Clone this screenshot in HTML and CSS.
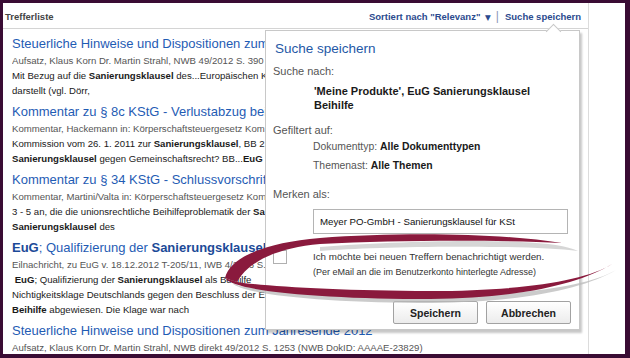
FILE: index.html
```html
<!DOCTYPE html>
<html lang="de">
<head>
    <meta charset="UTF-8">
    <title>Trefferliste - Suche speichern</title>
    <link rel="stylesheet" href="styles.css">
</head>
<body>
<div class="frame">
    <div class="results-col">
        <div class="list-head">
            <span class="list-title">Trefferliste</span>
            <span class="head-links">
                <a href="#">Sortiert nach "Relevanz" <span class="caret">&#9660;</span></a>
                <span class="sep">|</span>
                <a href="#">Suche speichern</a>
            </span>
        </div>

        <!-- hits behind the dropdown are cut at its left edge -->
        <ul class="hits">
            <li class="hit">
                <a class="hit-title" href="#">Steuerliche Hinweise und Dispositionen zum</a>
                <div class="hit-meta">Aufsatz, Klaus Korn Dr. Martin Strahl, NWB 49/2012 S. 390</div>
                <div class="hit-text">Mit Bezug auf die <b>Sanierungsklausel</b> des...Europäischen K</div>
                <div class="hit-text">darstellt (vgl. Dörr,</div>
            </li>
            <li class="hit">
                <a class="hit-title" href="#">Kommentar zu § 8c KStG - Verlustabzug bei</a>
                <div class="hit-meta">Kommentar, Hackemann in: Körperschaftsteuergesetz Kom</div>
                <div class="hit-text">Kommission vom 26. 1. 2011 zur <b>Sanierungsklausel</b>, BB 2</div>
                <div class="hit-text"><b>Sanierungsklausel</b> gegen Gemeinschaftsrecht? BB...<b>EuG</b></div>
            </li>
            <li class="hit">
                <a class="hit-title" href="#">Kommentar zu § 34 KStG - Schlussvorschrift</a>
                <div class="hit-meta">Kommentar, Martini/Valta in: Körperschaftsteuergesetz Kom</div>
                <div class="hit-text">3 - 5 an, die die unionsrechtliche Beihilfeproblematik der <b>Sa</b></div>
                <div class="hit-text"><b>Sanierungsklausel</b> des</div>
            </li>
            <li class="hit">
                <a class="hit-title" href="#"><b>EuG</b>; Qualifizierung der <b>Sanierungsklausel</b></a>
                <div class="hit-meta">Eilnachricht, zu EuG v. 18.12.2012 T-205/11, IWB 4/2013 S.</div>
                <div class="hit-text">&nbsp;<b>EuG</b>; Qualifizierung der <b>Sanierungsklausel</b> als Beihilfe</div>
                <div class="hit-text">Nichtigkeitsklage Deutschlands gegen den Beschluss der E</div>
                <div class="hit-text"><b>Beihilfe</b> abgewiesen. Die Klage war nach</div>
            </li>
            <li class="hit hit-open">
                <a class="hit-title" href="#">Steuerliche Hinweise und Dispositionen zum Jahresende 2012</a>
                <div class="hit-meta">Aufsatz, Klaus Korn Dr. Martin Strahl, NWB direkt 49/2012 S. 1253 (NWB DokID: AAAAE-23829)</div>
            </li>
        </ul>
    </div>
    <div class="side-col"></div>

    <!-- Dropdown: Suche speichern -->
    <div class="save-popup">
        <h2 class="popup-title">Suche speichern</h2>

        <div class="popup-label">Suche nach:</div>
        <div class="query">'Meine Produkte', EuG Sanierungsklausel Beihilfe</div>

        <div class="popup-label filter-label">Gefiltert auf:</div>
        <div class="filter-row">Dokumenttyp: <b>Alle Dokumenttypen</b></div>
        <div class="filter-row">Themenast: <b>Alle Themen</b></div>

        <div class="popup-label merk-label">Merken als:</div>
        <input class="name-input" type="text" value="Meyer PO-GmbH - Sanierungsklausel für KSt">

        <div class="notify">
            <span class="check-box"></span>
            <div class="notify-text">
                <div class="notify-main">Ich möchte bei neuen Treffern benachrichtigt werden.</div>
                <div class="notify-sub">(Per eMail an die im Benutzerkonto hinterlegte Adresse)</div>
            </div>
        </div>

        <div class="popup-buttons">
            <button type="button" class="btn">Speichern</button>
            <button type="button" class="btn">Abbrechen</button>
        </div>
    </div>

    <!-- hand drawn marker round the notification option -->
    <svg class="swoosh" viewBox="0 0 630 358" width="630" height="358">
        <path fill="#b9b9b9" opacity="0.75" d="M232,283 C246,296 335,303 432,303 C522,302 584,289 616,270 C589,286 522,296 432,296 C342,296 266,290 240,286 Z"/>
        <path fill="#c4c4c4" opacity="0.7" d="M320,247 C400,241 480,240 520,242 C548,243 568,246 578,251 C560,249 530,247 500,247 C420,246 360,248 320,251 Z"/>
        <path fill="#8a1a3d" d="M225,278 C230,258 262,243 320,238 C400,232 500,233 562,243 C500,240 400,240 320,244 C276,248 248,262 237,282 Z"/>
        <path fill="#8a1a3d" d="M225,278 C234,292 330,299 430,299 C520,298 580,284 612,264 C586,281 520,291 430,291 C340,291 262,286 237,282 Z"/>
    </svg>
</div>
</body>
</html>
```

FILE: styles.css
```css
body {
    margin: 0;
    font-family: "Liberation Sans", Arial, sans-serif;
    color: #222;
}

.frame {
    position: relative;
    width: 630px;
    height: 358px;
    box-sizing: border-box;
    border-style: solid;
    border-color: #3a0c34;
    border-width: 3px 5px 4px 3px;
    background-color: #fff;
    display: flex;
    overflow: hidden;
}

/* left column with the hit list */
.results-col {
    width: 586px;
    box-sizing: border-box;
    border-right: 1px solid #dcdcdc;
    overflow: hidden;
}

.side-col {
    flex: 1;
}

.list-head {
    height: 26px;
    box-sizing: border-box;
    display: flex;
    align-items: center;
    justify-content: space-between;
    padding: 1px 7px 0 2px;
    border-bottom: 1px solid #d4d4d4;
}

.list-title {
    font-size: 9.5px;
    font-weight: bold;
    color: #444;
}

.head-links {
    font-size: 9.5px;
    font-weight: bold;
    display: flex;
    align-items: center;
}

.head-links a {
    color: #2b4a8e;
    text-decoration: none;
}

.caret {
    font-family: "DejaVu Sans", sans-serif;
    font-size: 7.5px;
    margin-left: 2px;
}

.sep {
    color: #8a98b8;
    font-weight: normal;
    font-size: 12px;
    margin: 0 6px 0 5px;
}

.hits {
    list-style: none;
    margin: 0;
    padding: 6px 0 0 9px;
}

.hit {
    width: 253px;
    margin-bottom: 5px;
    white-space: nowrap;
    overflow: hidden;
}

.hit-open {
    width: auto;
}

.hit-title {
    display: block;
    font-size: 13px;
    line-height: 18px;
    color: #1f5cb4;
    text-decoration: none;
}

.hit-title b {
    color: #1c4a98;
}

.hit-meta {
    font-size: 9.6px;
    line-height: 15px;
    color: #555;
}

.hit-text {
    font-size: 9.6px;
    line-height: 15px;
    color: #1a1a1a;
}

/* save search dropdown */
.save-popup {
    position: absolute;
    left: 262px;
    top: 27px;
    width: 315px;
    height: 300px;
    box-sizing: border-box;
    padding: 9px 12px 0 7px;
    background-color: #fff;
    border: 1px solid #c8c8c8;
    box-shadow: 2px 3px 2px rgba(0, 0, 0, 0.22);
}

.save-popup::before {
    content: "";
    position: absolute;
    top: -5px;
    left: 282px;
    width: 10px;
    height: 10px;
    background-color: #fff;
    border-left: 1px solid #c8c8c8;
    border-top: 1px solid #c8c8c8;
    transform: rotate(45deg);
}

.popup-title {
    margin: 0 0 0 2px;
    font-size: 13.5px;
    line-height: 18px;
    font-weight: normal;
    color: #2458a6;
}

.popup-label {
    margin-top: 6px;
    font-size: 11px;
    line-height: 14px;
    color: #555;
}

.query {
    margin: 6px 0 0 41px;
    font-size: 11px;
    line-height: 14px;
    font-weight: bold;
    color: #1a1a1a;
    width: 240px;
}

.filter-label {
    margin-top: 11px;
}

.filter-row {
    margin-left: 40px;
    font-size: 10.4px;
    line-height: 19px;
    color: #555;
}

.filter-row:first-of-type {
    margin-top: 3px;
}

.filter-row b {
    color: #1a1a1a;
}

.merk-label {
    margin-top: 12px;
}

.name-input {
    display: block;
    margin: 8px 0 0 40px;
    width: 255px;
    height: 25px;
    box-sizing: border-box;
    padding: 0 6px;
    border: 1px solid #b4b4b4;
    font-family: "Liberation Sans", Arial, sans-serif;
    font-size: 9.7px;
    color: #111;
}

.notify {
    display: flex;
    margin-top: 16px;
}

.check-box {
    width: 14px;
    height: 14px;
    box-sizing: border-box;
    border: 1px solid #b0b0b0;
    background-color: #fff;
    margin-right: 26px;
    flex: none;
}

.notify-main {
    font-size: 9.8px;
    line-height: 14px;
    color: #333;
}

.notify-sub {
    font-size: 9px;
    line-height: 16px;
    color: #333;
}

.popup-buttons {
    display: flex;
    justify-content: flex-end;
    gap: 8px;
    margin: 21px -4px 0 0;
}

.btn {
    width: 85px;
    height: 23px;
    border: 1px solid #a2a2a2;
    border-radius: 2px;
    background: linear-gradient(#ffffff, #ececec);
    font-family: "Liberation Sans", Arial, sans-serif;
    font-size: 10.5px;
    font-weight: bold;
    color: #222;
}

.swoosh {
    position: absolute;
    left: -3px;
    top: -3px;
    pointer-events: none;
}
```
